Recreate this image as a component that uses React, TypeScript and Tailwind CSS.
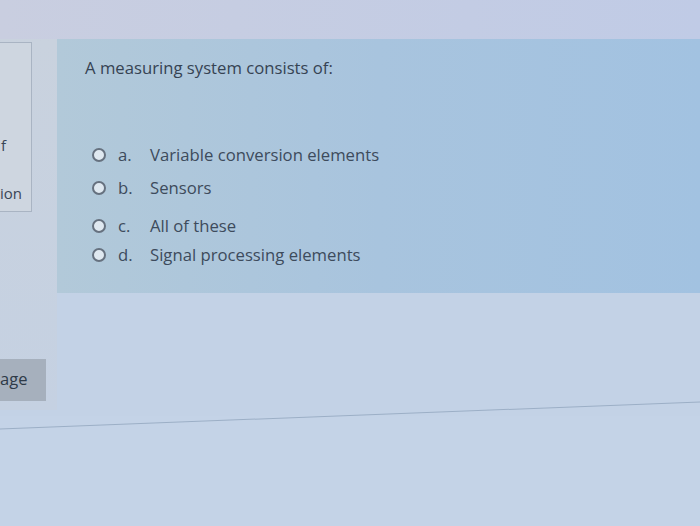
const options = [
  { letter: "a.", text: "Variable conversion elements", gap: "mt-[63px]" },
  { letter: "b.", text: "Sensors", gap: "mt-[9px]" },
  { letter: "c.", text: "All of these", gap: "mt-[14px]" },
  { letter: "d.", text: "Signal processing elements", gap: "mt-[5px]" },
];

export default function App() {
  return (
    <div className="w-[700px] h-[526px] overflow-hidden bg-[#c3d2e6] font-['Open_Sans',sans-serif] flex flex-col">
      {/* top strip */}
      <div className="h-[39px] bg-gradient-to-r from-[#c9cee0] to-[#c0cbe6] shrink-0" />

      <div className="flex h-[371px] shrink-0">
        {/* left nav, mostly cropped */}
        <div className="w-[57px] shrink-0 bg-gradient-to-b from-[#c9d2de] to-[#c5d1e2] flex flex-col">
          <div className="mt-[3px] w-[32px] h-[170px] bg-[#ced6e0] border border-l-0 border-[#a9b4c3] overflow-hidden flex flex-col text-[15px] text-[#3a4656]">
            <span className="mt-[92px] leading-[20px] pl-[1px]">f</span>
            <span className="mt-[28px] leading-[20px]">ion</span>
          </div>
          <div className="mt-[147px] w-[46px] h-[42px] bg-[#a6b0bd] flex items-center overflow-hidden">
            <span className="text-[16.5px] text-[#2e3a48] leading-none pb-[2px]">age</span>
          </div>
        </div>

        {/* question panel */}
        <div className="flex-1">
          <div className="h-[254px] bg-gradient-to-r from-[#b2c9d9] via-[#a8c4de] to-[#a2c2e1] pl-[28px] pt-[17px]">
            <div className="text-[16.7px] leading-[24px] text-[#364353]">
              A measuring system consists of:
            </div>
            {options.map((o) => (
              <div key={o.letter} className={`${o.gap} flex items-center h-[24px] text-[16.7px] text-[#3d4b5c]`}>
                <span className="ml-[7px] w-[14px] h-[14px] rounded-full border-2 border-[#66717f] bg-[#dfe8f0]" />
                <span className="ml-[12px] w-[32px]">{o.letter}</span>
                <span>{o.text}</span>
              </div>
            ))}
          </div>
        </div>
      </div>

      {/* footer rule */}
      <div className="mt-[5px] h-[1px] bg-[#9cafc6] -rotate-[2.2deg] scale-x-110" />
      <div className="flex-1 bg-[#c4d3e7]" />
    </div>
  );
}
